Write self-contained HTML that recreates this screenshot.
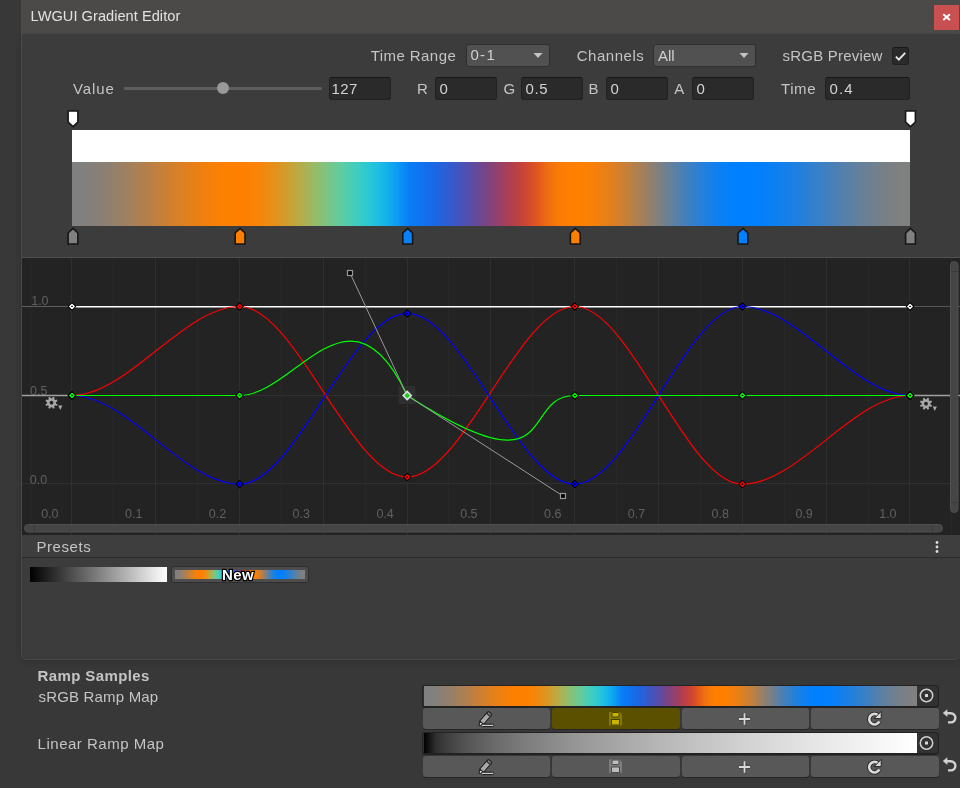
<!DOCTYPE html>
<html><head><meta charset="utf-8"><style>
*{margin:0;padding:0;box-sizing:border-box}
body{width:960px;height:788px;background:#383838;position:relative;overflow:hidden;font-family:"Liberation Sans", sans-serif;color:#c4c4c4;font-size:15px}
.a{position:absolute}
.fld{position:absolute;background:#2a2a2a;border:1px solid #212121;border-top-color:#161616;border-radius:3px}
.dd{position:absolute;background:#515151;border:1px solid #2f2f2f;border-radius:3px}
.btn{position:absolute;background:#585858;border-radius:3px;box-shadow:0 1px 0 #262626}
svg{position:absolute;left:0;top:0;will-change:transform}
</style></head><body>
<div class="a" style="left:21px;top:0;width:939px;height:34px;background:#4c4a48"></div>
<div class="a" style="left:934px;top:5px;width:25px;height:25px;background:#c85050"></div>
<div class="a" style="left:21px;top:34px;width:939px;height:626px;background:#3c3c3c;border-left:1px solid #4a4845;border-bottom:1px solid #4a4845;border-bottom-left-radius:5px;border-bottom-right-radius:5px;box-shadow:0 2px 6px rgba(0,0,0,0.15)"></div>

<div class="dd" style="left:466px;top:44px;width:84px;height:23px"></div>
<div class="dd" style="left:653px;top:44px;width:103px;height:23px"></div>
<div class="fld" style="left:892px;top:47px;width:17px;height:18px"></div>

<div class="a" style="left:124px;top:87px;width:198px;height:3px;background:#5e5e5e;border-radius:1px"></div>
<div class="a" style="left:217px;top:82px;width:12px;height:12px;background:#999;border-radius:50%"></div>
<div class="fld" style="left:329px;top:77px;width:62px;height:23px"></div>
<div class="fld" style="left:435px;top:77px;width:62px;height:23px"></div>
<div class="fld" style="left:521px;top:77px;width:62px;height:23px"></div>
<div class="fld" style="left:606px;top:77px;width:62px;height:23px"></div>
<div class="fld" style="left:692px;top:77px;width:62px;height:23px"></div>
<div class="fld" style="left:825px;top:77px;width:85px;height:23px"></div>

<div class="a" style="left:72px;top:130px;width:838px;height:32px;background:#fff"></div>
<div class="a" style="left:72px;top:162px;width:838px;height:64px;background:linear-gradient(90deg,#808080 0.00%,#80807f 0.50%,#80807f 1.01%,#827f7d 1.51%,#83807c 2.01%,#857f7a 2.51%,#878078 3.02%,#8a7f75 3.52%,#8d7f72 4.02%,#907f6f 4.52%,#94806b 5.03%,#978068 5.53%,#9b8064 6.03%,#9f8060 6.53%,#a4805b 7.04%,#a88057 7.54%,#ad8052 8.04%,#b17f4e 8.54%,#b67f49 9.05%,#bb7f44 9.55%,#c0803f 10.05%,#c5803a 10.55%,#c98036 11.06%,#ce8031 11.56%,#d3802c 12.06%,#d78028 12.56%,#dc8023 13.07%,#e0801f 13.57%,#e4801b 14.07%,#e88017 14.57%,#ec8013 15.08%,#ef8010 15.58%,#f2800d 16.08%,#f5800a 16.58%,#f88007 17.09%,#fa8005 17.59%,#fc8003 18.09%,#fd8002 18.59%,#fe8001 19.10%,#ff8000 19.60%,#ff8000 20.10%,#fe8001 20.60%,#fd8102 21.11%,#fb8305 21.61%,#f78508 22.11%,#f4870b 22.61%,#ef8a10 23.12%,#ea8e15 23.62%,#e4911b 24.12%,#de9521 24.62%,#d79928 25.13%,#d09e2f 25.63%,#c8a237 26.13%,#c0a73f 26.63%,#b8ab47 27.14%,#afaf50 27.64%,#a6b459 28.14%,#9eb862 28.64%,#94bc6b 29.15%,#8bbf74 29.65%,#82c37e 30.15%,#79c687 30.65%,#70c890 31.16%,#67ca99 31.66%,#5ecca2 32.16%,#55cdaa 32.66%,#4dcdb3 33.17%,#44cdbb 33.67%,#3dccc3 34.17%,#35cbca 34.67%,#2ec8d1 35.18%,#28c5d8 35.68%,#22c1de 36.18%,#1cbce3 36.68%,#17b6e8 37.19%,#13aeec 37.69%,#10a6ef 38.19%,#0d9df2 38.69%,#0b93f4 39.20%,#0a87f5 39.70%,#0a7ef5 40.20%,#0b7af4 40.70%,#0d76f2 41.21%,#0f73f0 41.71%,#136fed 42.21%,#176be9 42.71%,#1b68e4 43.22%,#2064df 43.72%,#2661d9 44.22%,#2d5ed3 44.72%,#345acc 45.23%,#3b57c4 45.73%,#4354bd 46.23%,#4b51b5 46.73%,#534fac 47.24%,#5c4ca4 47.74%,#654a9b 48.24%,#6e4792 48.74%,#774589 49.25%,#80437f 49.75%,#894276 50.25%,#93416d 50.75%,#9c4064 51.26%,#a53f5b 51.76%,#ae3f52 52.26%,#b64049 52.76%,#bf4141 53.27%,#c74439 53.77%,#ce4731 54.27%,#d64d2a 54.77%,#dd5323 55.28%,#e35c1c 55.78%,#e96516 56.28%,#ee6d11 56.78%,#f3730c 57.29%,#f77808 57.79%,#fa7b05 58.29%,#fc7e03 58.79%,#fe7f01 59.30%,#ff7f00 59.80%,#ff8000 60.30%,#fe8001 60.80%,#fc8003 61.31%,#f98006 61.81%,#f68009 62.31%,#f1800e 62.81%,#ec8013 63.32%,#e78018 63.82%,#e07f1f 64.32%,#da8025 64.82%,#d27f2d 65.33%,#cb8034 65.83%,#c3803d 66.33%,#ba8045 66.83%,#b1804e 67.34%,#a87f57 67.84%,#9f7f60 68.34%,#967f6a 68.84%,#8c7f73 69.35%,#83807d 69.85%,#798086 70.35%,#6f8090 70.85%,#668099 71.36%,#5d80a3 71.86%,#5380ac 72.36%,#4a80b5 72.86%,#4280be 73.37%,#3980c6 73.87%,#3180ce 74.37%,#2a80d5 74.87%,#2380dc 75.38%,#1c80e3 75.88%,#1680e9 76.38%,#1180ee 76.88%,#0c80f3 77.39%,#0880f7 77.89%,#0580fa 78.39%,#0280fd 78.89%,#0180fe 79.40%,#007fff 79.90%,#0080ff 80.40%,#0180fe 80.90%,#0280fd 81.41%,#0380fc 81.91%,#057ffa 82.41%,#0780f8 82.91%,#0a80f5 83.42%,#0d7ff2 83.92%,#1080ef 84.42%,#1380ec 84.92%,#1780e8 85.43%,#1b80e4 85.93%,#1f7fe0 86.43%,#237fdc 86.93%,#2880d7 87.44%,#2c80d3 87.94%,#3180ce 88.44%,#3680c9 88.94%,#3a80c5 89.45%,#3f80c0 89.95%,#4480bb 90.45%,#497fb6 90.95%,#4e80b1 91.46%,#5280ad 91.96%,#5780a8 92.46%,#5b80a4 92.96%,#60809f 93.47%,#64809b 93.97%,#688097 94.47%,#6b8094 94.97%,#6f8090 95.48%,#72808d 95.98%,#75808a 96.48%,#788087 96.98%,#7a8085 97.49%,#7c8083 97.99%,#7d8082 98.49%,#7f8080 98.99%,#7f8080 99.50%,#808080 100.00%)"></div>

<div class="a" style="left:22px;top:257px;width:938px;height:278px;background:#232323;border-top:1px solid #4f4f4f"></div>
<div class="a" style="left:22px;top:535px;width:938px;height:23px;background:#3e3e3e;border-bottom:1px solid #2a2a2a"></div>

<div class="a" style="left:30px;top:567px;width:137px;height:15px;background:linear-gradient(90deg,#000,#fff)"></div>
<div class="a" style="left:171px;top:566px;width:138px;height:17px;background:#4d4d4d;border:1px solid #2e2e2e;border-radius:3px"></div>
<div class="a" style="left:175px;top:570px;width:130px;height:9px;background:linear-gradient(90deg,#808080 0.00%,#80807f 0.50%,#80807f 1.01%,#827f7d 1.51%,#83807c 2.01%,#857f7a 2.51%,#878078 3.02%,#8a7f75 3.52%,#8d7f72 4.02%,#907f6f 4.52%,#94806b 5.03%,#978068 5.53%,#9b8064 6.03%,#9f8060 6.53%,#a4805b 7.04%,#a88057 7.54%,#ad8052 8.04%,#b17f4e 8.54%,#b67f49 9.05%,#bb7f44 9.55%,#c0803f 10.05%,#c5803a 10.55%,#c98036 11.06%,#ce8031 11.56%,#d3802c 12.06%,#d78028 12.56%,#dc8023 13.07%,#e0801f 13.57%,#e4801b 14.07%,#e88017 14.57%,#ec8013 15.08%,#ef8010 15.58%,#f2800d 16.08%,#f5800a 16.58%,#f88007 17.09%,#fa8005 17.59%,#fc8003 18.09%,#fd8002 18.59%,#fe8001 19.10%,#ff8000 19.60%,#ff8000 20.10%,#fe8001 20.60%,#fd8102 21.11%,#fb8305 21.61%,#f78508 22.11%,#f4870b 22.61%,#ef8a10 23.12%,#ea8e15 23.62%,#e4911b 24.12%,#de9521 24.62%,#d79928 25.13%,#d09e2f 25.63%,#c8a237 26.13%,#c0a73f 26.63%,#b8ab47 27.14%,#afaf50 27.64%,#a6b459 28.14%,#9eb862 28.64%,#94bc6b 29.15%,#8bbf74 29.65%,#82c37e 30.15%,#79c687 30.65%,#70c890 31.16%,#67ca99 31.66%,#5ecca2 32.16%,#55cdaa 32.66%,#4dcdb3 33.17%,#44cdbb 33.67%,#3dccc3 34.17%,#35cbca 34.67%,#2ec8d1 35.18%,#28c5d8 35.68%,#22c1de 36.18%,#1cbce3 36.68%,#17b6e8 37.19%,#13aeec 37.69%,#10a6ef 38.19%,#0d9df2 38.69%,#0b93f4 39.20%,#0a87f5 39.70%,#0a7ef5 40.20%,#0b7af4 40.70%,#0d76f2 41.21%,#0f73f0 41.71%,#136fed 42.21%,#176be9 42.71%,#1b68e4 43.22%,#2064df 43.72%,#2661d9 44.22%,#2d5ed3 44.72%,#345acc 45.23%,#3b57c4 45.73%,#4354bd 46.23%,#4b51b5 46.73%,#534fac 47.24%,#5c4ca4 47.74%,#654a9b 48.24%,#6e4792 48.74%,#774589 49.25%,#80437f 49.75%,#894276 50.25%,#93416d 50.75%,#9c4064 51.26%,#a53f5b 51.76%,#ae3f52 52.26%,#b64049 52.76%,#bf4141 53.27%,#c74439 53.77%,#ce4731 54.27%,#d64d2a 54.77%,#dd5323 55.28%,#e35c1c 55.78%,#e96516 56.28%,#ee6d11 56.78%,#f3730c 57.29%,#f77808 57.79%,#fa7b05 58.29%,#fc7e03 58.79%,#fe7f01 59.30%,#ff7f00 59.80%,#ff8000 60.30%,#fe8001 60.80%,#fc8003 61.31%,#f98006 61.81%,#f68009 62.31%,#f1800e 62.81%,#ec8013 63.32%,#e78018 63.82%,#e07f1f 64.32%,#da8025 64.82%,#d27f2d 65.33%,#cb8034 65.83%,#c3803d 66.33%,#ba8045 66.83%,#b1804e 67.34%,#a87f57 67.84%,#9f7f60 68.34%,#967f6a 68.84%,#8c7f73 69.35%,#83807d 69.85%,#798086 70.35%,#6f8090 70.85%,#668099 71.36%,#5d80a3 71.86%,#5380ac 72.36%,#4a80b5 72.86%,#4280be 73.37%,#3980c6 73.87%,#3180ce 74.37%,#2a80d5 74.87%,#2380dc 75.38%,#1c80e3 75.88%,#1680e9 76.38%,#1180ee 76.88%,#0c80f3 77.39%,#0880f7 77.89%,#0580fa 78.39%,#0280fd 78.89%,#0180fe 79.40%,#007fff 79.90%,#0080ff 80.40%,#0180fe 80.90%,#0280fd 81.41%,#0380fc 81.91%,#057ffa 82.41%,#0780f8 82.91%,#0a80f5 83.42%,#0d7ff2 83.92%,#1080ef 84.42%,#1380ec 84.92%,#1780e8 85.43%,#1b80e4 85.93%,#1f7fe0 86.43%,#237fdc 86.93%,#2880d7 87.44%,#2c80d3 87.94%,#3180ce 88.44%,#3680c9 88.94%,#3a80c5 89.45%,#3f80c0 89.95%,#4480bb 90.45%,#497fb6 90.95%,#4e80b1 91.46%,#5280ad 91.96%,#5780a8 92.46%,#5b80a4 92.96%,#60809f 93.47%,#64809b 93.97%,#688097 94.47%,#6b8094 94.97%,#6f8090 95.48%,#72808d 95.98%,#75808a 96.48%,#788087 96.98%,#7a8085 97.49%,#7c8083 97.99%,#7d8082 98.49%,#7f8080 98.99%,#7f8080 99.50%,#808080 100.00%)"></div>

<div class="a" style="left:422px;top:685px;width:517px;height:23px;background:#323232;border:1px solid #222;border-bottom-width:2px;border-radius:3px 4px 4px 3px"></div>
<div class="a" style="left:424px;top:686px;width:493px;height:20px;background:linear-gradient(90deg,#808080 0.00%,#80807f 0.50%,#80807f 1.01%,#827f7d 1.51%,#83807c 2.01%,#857f7a 2.51%,#878078 3.02%,#8a7f75 3.52%,#8d7f72 4.02%,#907f6f 4.52%,#94806b 5.03%,#978068 5.53%,#9b8064 6.03%,#9f8060 6.53%,#a4805b 7.04%,#a88057 7.54%,#ad8052 8.04%,#b17f4e 8.54%,#b67f49 9.05%,#bb7f44 9.55%,#c0803f 10.05%,#c5803a 10.55%,#c98036 11.06%,#ce8031 11.56%,#d3802c 12.06%,#d78028 12.56%,#dc8023 13.07%,#e0801f 13.57%,#e4801b 14.07%,#e88017 14.57%,#ec8013 15.08%,#ef8010 15.58%,#f2800d 16.08%,#f5800a 16.58%,#f88007 17.09%,#fa8005 17.59%,#fc8003 18.09%,#fd8002 18.59%,#fe8001 19.10%,#ff8000 19.60%,#ff8000 20.10%,#fe8001 20.60%,#fd8102 21.11%,#fb8305 21.61%,#f78508 22.11%,#f4870b 22.61%,#ef8a10 23.12%,#ea8e15 23.62%,#e4911b 24.12%,#de9521 24.62%,#d79928 25.13%,#d09e2f 25.63%,#c8a237 26.13%,#c0a73f 26.63%,#b8ab47 27.14%,#afaf50 27.64%,#a6b459 28.14%,#9eb862 28.64%,#94bc6b 29.15%,#8bbf74 29.65%,#82c37e 30.15%,#79c687 30.65%,#70c890 31.16%,#67ca99 31.66%,#5ecca2 32.16%,#55cdaa 32.66%,#4dcdb3 33.17%,#44cdbb 33.67%,#3dccc3 34.17%,#35cbca 34.67%,#2ec8d1 35.18%,#28c5d8 35.68%,#22c1de 36.18%,#1cbce3 36.68%,#17b6e8 37.19%,#13aeec 37.69%,#10a6ef 38.19%,#0d9df2 38.69%,#0b93f4 39.20%,#0a87f5 39.70%,#0a7ef5 40.20%,#0b7af4 40.70%,#0d76f2 41.21%,#0f73f0 41.71%,#136fed 42.21%,#176be9 42.71%,#1b68e4 43.22%,#2064df 43.72%,#2661d9 44.22%,#2d5ed3 44.72%,#345acc 45.23%,#3b57c4 45.73%,#4354bd 46.23%,#4b51b5 46.73%,#534fac 47.24%,#5c4ca4 47.74%,#654a9b 48.24%,#6e4792 48.74%,#774589 49.25%,#80437f 49.75%,#894276 50.25%,#93416d 50.75%,#9c4064 51.26%,#a53f5b 51.76%,#ae3f52 52.26%,#b64049 52.76%,#bf4141 53.27%,#c74439 53.77%,#ce4731 54.27%,#d64d2a 54.77%,#dd5323 55.28%,#e35c1c 55.78%,#e96516 56.28%,#ee6d11 56.78%,#f3730c 57.29%,#f77808 57.79%,#fa7b05 58.29%,#fc7e03 58.79%,#fe7f01 59.30%,#ff7f00 59.80%,#ff8000 60.30%,#fe8001 60.80%,#fc8003 61.31%,#f98006 61.81%,#f68009 62.31%,#f1800e 62.81%,#ec8013 63.32%,#e78018 63.82%,#e07f1f 64.32%,#da8025 64.82%,#d27f2d 65.33%,#cb8034 65.83%,#c3803d 66.33%,#ba8045 66.83%,#b1804e 67.34%,#a87f57 67.84%,#9f7f60 68.34%,#967f6a 68.84%,#8c7f73 69.35%,#83807d 69.85%,#798086 70.35%,#6f8090 70.85%,#668099 71.36%,#5d80a3 71.86%,#5380ac 72.36%,#4a80b5 72.86%,#4280be 73.37%,#3980c6 73.87%,#3180ce 74.37%,#2a80d5 74.87%,#2380dc 75.38%,#1c80e3 75.88%,#1680e9 76.38%,#1180ee 76.88%,#0c80f3 77.39%,#0880f7 77.89%,#0580fa 78.39%,#0280fd 78.89%,#0180fe 79.40%,#007fff 79.90%,#0080ff 80.40%,#0180fe 80.90%,#0280fd 81.41%,#0380fc 81.91%,#057ffa 82.41%,#0780f8 82.91%,#0a80f5 83.42%,#0d7ff2 83.92%,#1080ef 84.42%,#1380ec 84.92%,#1780e8 85.43%,#1b80e4 85.93%,#1f7fe0 86.43%,#237fdc 86.93%,#2880d7 87.44%,#2c80d3 87.94%,#3180ce 88.44%,#3680c9 88.94%,#3a80c5 89.45%,#3f80c0 89.95%,#4480bb 90.45%,#497fb6 90.95%,#4e80b1 91.46%,#5280ad 91.96%,#5780a8 92.46%,#5b80a4 92.96%,#60809f 93.47%,#64809b 93.97%,#688097 94.47%,#6b8094 94.97%,#6f8090 95.48%,#72808d 95.98%,#75808a 96.48%,#788087 96.98%,#7a8085 97.49%,#7c8083 97.99%,#7d8082 98.49%,#7f8080 98.99%,#7f8080 99.50%,#808080 100.00%)"></div>
<div class="a" style="left:422px;top:732px;width:517px;height:23px;background:#323232;border:1px solid #222;border-bottom-width:2px;border-radius:3px 4px 4px 3px"></div>
<div class="a" style="left:424px;top:733px;width:493px;height:20px;background:linear-gradient(90deg,#000000 0.0%,#303030 2.5%,#414141 5.0%,#4f4f4f 7.5%,#5a5a5a 10.0%,#636363 12.5%,#6c6c6c 15.0%,#737373 17.5%,#7b7b7b 20.0%,#818181 22.5%,#888888 25.0%,#8e8e8e 27.5%,#949494 30.0%,#999999 32.5%,#9e9e9e 35.0%,#a3a3a3 37.5%,#a8a8a8 40.0%,#adadad 42.5%,#b1b1b1 45.0%,#b6b6b6 47.5%,#bababa 50.0%,#bebebe 52.5%,#c2c2c2 55.0%,#c6c6c6 57.5%,#cacaca 60.0%,#cecece 62.5%,#d2d2d2 65.0%,#d5d5d5 67.5%,#d9d9d9 70.0%,#dcdcdc 72.5%,#e0e0e0 75.0%,#e3e3e3 77.5%,#e6e6e6 80.0%,#eaeaea 82.5%,#ededed 85.0%,#f0f0f0 87.5%,#f3f3f3 90.0%,#f6f6f6 92.5%,#f9f9f9 95.0%,#fcfcfc 97.5%,#ffffff 100.0%)"></div>
<div class="btn" style="left:423px;top:708px;width:127px;height:21px;background:#585858"></div><div class="btn" style="left:552px;top:708px;width:128px;height:21px;background:#5a5000"></div><div class="btn" style="left:682px;top:708px;width:127px;height:21px;background:#585858"></div><div class="btn" style="left:811px;top:708px;width:128px;height:21px;background:#585858"></div><div class="btn" style="left:423px;top:756px;width:127px;height:21px;background:#585858"></div><div class="btn" style="left:552px;top:756px;width:128px;height:21px;background:#585858"></div><div class="btn" style="left:682px;top:756px;width:127px;height:21px;background:#585858"></div><div class="btn" style="left:811px;top:756px;width:128px;height:21px;background:#585858"></div>

<svg width="960" height="788" font-family='"Liberation Sans", sans-serif'>
<g stroke="#161616" stroke-width="1.6"><path d="M68.10 111 h9.8 v11 l-4.9 4.7 l-4.9 -4.7 z" fill="#fff"/><path d="M905.60 111 h9.8 v11 l-4.9 4.7 l-4.9 -4.7 z" fill="#fff"/><path d="M68.10 244 h9.8 v-11 l-4.9 -4.7 l-4.9 4.7 z" fill="#808080"/><path d="M235.20 244 h9.8 v-11 l-4.9 -4.7 l-4.9 4.7 z" fill="#ff8000"/><path d="M402.80 244 h9.8 v-11 l-4.9 -4.7 l-4.9 4.7 z" fill="#0980f5"/><path d="M570.40 244 h9.8 v-11 l-4.9 -4.7 l-4.9 4.7 z" fill="#ff8000"/><path d="M738.00 244 h9.8 v-11 l-4.9 -4.7 l-4.9 4.7 z" fill="#0080ff"/><path d="M905.60 244 h9.8 v-11 l-4.9 -4.7 l-4.9 4.7 z" fill="#808080"/></g>
<g stroke="#2b2b2b" stroke-width="1"><line x1="30.5" y1="258" x2="30.5" y2="535" stroke="#282828"/><line x1="71.5" y1="258" x2="71.5" y2="535" stroke="#2f2f2f"/><line x1="113.5" y1="258" x2="113.5" y2="535" stroke="#282828"/><line x1="155.5" y1="258" x2="155.5" y2="535" stroke="#2f2f2f"/><line x1="197.5" y1="258" x2="197.5" y2="535" stroke="#282828"/><line x1="239.5" y1="258" x2="239.5" y2="535" stroke="#2f2f2f"/><line x1="281.5" y1="258" x2="281.5" y2="535" stroke="#282828"/><line x1="323.5" y1="258" x2="323.5" y2="535" stroke="#2f2f2f"/><line x1="365.5" y1="258" x2="365.5" y2="535" stroke="#282828"/><line x1="407.5" y1="258" x2="407.5" y2="535" stroke="#2f2f2f"/><line x1="448.5" y1="258" x2="448.5" y2="535" stroke="#282828"/><line x1="490.5" y1="258" x2="490.5" y2="535" stroke="#2f2f2f"/><line x1="532.5" y1="258" x2="532.5" y2="535" stroke="#282828"/><line x1="574.5" y1="258" x2="574.5" y2="535" stroke="#2f2f2f"/><line x1="616.5" y1="258" x2="616.5" y2="535" stroke="#282828"/><line x1="658.5" y1="258" x2="658.5" y2="535" stroke="#2f2f2f"/><line x1="700.5" y1="258" x2="700.5" y2="535" stroke="#282828"/><line x1="742.5" y1="258" x2="742.5" y2="535" stroke="#2f2f2f"/><line x1="784.5" y1="258" x2="784.5" y2="535" stroke="#282828"/><line x1="826.5" y1="258" x2="826.5" y2="535" stroke="#2f2f2f"/><line x1="868.5" y1="258" x2="868.5" y2="535" stroke="#282828"/><line x1="909.5" y1="258" x2="909.5" y2="535" stroke="#2f2f2f"/><line x1="951.5" y1="258" x2="951.5" y2="535" stroke="#282828"/><line x1="22" y1="306.5" x2="960" y2="306.5" stroke="#303030"/><line x1="22" y1="395.5" x2="960" y2="395.5" stroke="#303030"/><line x1="22" y1="483.5" x2="960" y2="483.5" stroke="#303030"/></g>
<g fill="#606060" font-size="12.5">
<text x="31.2" y="305.2">1.0</text><text x="30" y="394.5">0.5</text><text x="29.8" y="484">0.0</text>
<text x="41.2" y="518.2">0.0</text><text x="125.0" y="518.2">0.1</text><text x="208.8" y="518.2">0.2</text><text x="292.6" y="518.2">0.3</text><text x="376.4" y="518.2">0.4</text><text x="460.2" y="518.2">0.5</text><text x="544.0" y="518.2">0.6</text><text x="627.8" y="518.2">0.7</text><text x="711.6" y="518.2">0.8</text><text x="795.4" y="518.2">0.9</text><text x="879.2" y="518.2">1.0</text>
</g>
<line x1="22" y1="306.5" x2="72" y2="306.5" stroke="#5e5e5e" stroke-width="1"/>
<line x1="22" y1="395.5" x2="72" y2="395.5" stroke="#a0a0a0" stroke-width="1.5"/>
<line x1="910" y1="395.5" x2="960" y2="395.5" stroke="#a0a0a0" stroke-width="1.5"/>
<line x1="910" y1="306.5" x2="960" y2="306.5" stroke="#555" stroke-width="1"/>
<line x1="72" y1="306.7" x2="910" y2="306.7" stroke="#fff" stroke-width="1.6"/>
<rect x="398.5" y="386" width="17" height="18" fill="#2f2f2f"/>
<g fill="none" stroke-width="1.2">
<path d="M72.00 395.50 C127.87 395.50 183.73 306.50 239.60 306.50 C295.47 306.50 351.33 477.10 407.20 477.10 C463.07 477.10 518.93 306.50 574.80 306.50 C630.67 306.50 686.53 484.20 742.40 484.20 C798.27 484.20 854.13 395.50 910.00 395.50" stroke="#ff0000"/>
<path d="M72.00 395.50 C127.87 395.50 183.73 484.20 239.60 484.20 C295.47 484.20 351.33 313.44 407.20 313.44 C463.07 313.44 518.93 484.20 574.80 484.20 C630.67 484.20 686.53 306.50 742.40 306.50 C798.27 306.50 854.13 395.50 910.00 395.50" stroke="#0000ff"/>
<path d="M72.00 395.50 C127.87 395.50 183.73 395.50 239.60 395.50 C295.47 395.50 350.00 273.00 407.20 395.50 C563.00 496.00 518.93 395.50 574.80 395.50 C630.67 395.50 686.53 395.50 742.40 395.50 C798.27 395.50 854.13 395.50 910.00 395.50" stroke="#00ff00"/>
</g>
<g stroke="#9a9a9a" stroke-width="1" fill="none">
<line x1="350" y1="273" x2="407.2" y2="395.5"/>
<line x1="407.2" y1="395.5" x2="563" y2="496"/>
</g>
<rect x="347.5" y="270.5" width="5" height="5" fill="#000" stroke="#999" stroke-width="1.2"/>
<rect x="560.5" y="493.5" width="5" height="5" fill="#000" stroke="#999" stroke-width="1.2"/>
<path d="M67.6 306.5 l4.4 -4.4 l4.4 4.4 l-4.4 4.4 z" fill="#000"/><path d="M69.9 306.5 l2.1 -2.1 l2.1 2.1 l-2.1 2.1 z" fill="none" stroke="#fff" stroke-width="1.4"/><path d="M905.6 306.5 l4.4 -4.4 l4.4 4.4 l-4.4 4.4 z" fill="#000"/><path d="M907.9 306.5 l2.1 -2.1 l2.1 2.1 l-2.1 2.1 z" fill="none" stroke="#fff" stroke-width="1.4"/><path d="M67.6 395.5 l4.4 -4.4 l4.4 4.4 l-4.4 4.4 z" fill="#000"/><path d="M69.9 395.5 l2.1 -2.1 l2.1 2.1 l-2.1 2.1 z" fill="none" stroke="#ff0000" stroke-width="1.4"/><path d="M67.6 395.5 l4.4 -4.4 l4.4 4.4 l-4.4 4.4 z" fill="#000"/><path d="M69.9 395.5 l2.1 -2.1 l2.1 2.1 l-2.1 2.1 z" fill="none" stroke="#0000ff" stroke-width="1.4"/><path d="M67.6 395.5 l4.4 -4.4 l4.4 4.4 l-4.4 4.4 z" fill="#000"/><path d="M69.9 395.5 l2.1 -2.1 l2.1 2.1 l-2.1 2.1 z" fill="none" stroke="#00ff00" stroke-width="1.4"/><path d="M235.2 306.5 l4.4 -4.4 l4.4 4.4 l-4.4 4.4 z" fill="#000"/><path d="M237.5 306.5 l2.1 -2.1 l2.1 2.1 l-2.1 2.1 z" fill="none" stroke="#ff0000" stroke-width="1.4"/><path d="M235.2 484.2 l4.4 -4.4 l4.4 4.4 l-4.4 4.4 z" fill="#000"/><path d="M237.5 484.2 l2.1 -2.1 l2.1 2.1 l-2.1 2.1 z" fill="none" stroke="#0000ff" stroke-width="1.4"/><path d="M235.2 395.5 l4.4 -4.4 l4.4 4.4 l-4.4 4.4 z" fill="#000"/><path d="M237.5 395.5 l2.1 -2.1 l2.1 2.1 l-2.1 2.1 z" fill="none" stroke="#00ff00" stroke-width="1.4"/><path d="M402.8 477.1 l4.4 -4.4 l4.4 4.4 l-4.4 4.4 z" fill="#000"/><path d="M405.1 477.1 l2.1 -2.1 l2.1 2.1 l-2.1 2.1 z" fill="none" stroke="#ff0000" stroke-width="1.4"/><path d="M402.8 313.4 l4.4 -4.4 l4.4 4.4 l-4.4 4.4 z" fill="#000"/><path d="M405.1 313.4 l2.1 -2.1 l2.1 2.1 l-2.1 2.1 z" fill="none" stroke="#0000ff" stroke-width="1.4"/><path d="M570.4 306.5 l4.4 -4.4 l4.4 4.4 l-4.4 4.4 z" fill="#000"/><path d="M572.7 306.5 l2.1 -2.1 l2.1 2.1 l-2.1 2.1 z" fill="none" stroke="#ff0000" stroke-width="1.4"/><path d="M570.4 484.2 l4.4 -4.4 l4.4 4.4 l-4.4 4.4 z" fill="#000"/><path d="M572.7 484.2 l2.1 -2.1 l2.1 2.1 l-2.1 2.1 z" fill="none" stroke="#0000ff" stroke-width="1.4"/><path d="M570.4 395.5 l4.4 -4.4 l4.4 4.4 l-4.4 4.4 z" fill="#000"/><path d="M572.7 395.5 l2.1 -2.1 l2.1 2.1 l-2.1 2.1 z" fill="none" stroke="#00ff00" stroke-width="1.4"/><path d="M738.0 484.2 l4.4 -4.4 l4.4 4.4 l-4.4 4.4 z" fill="#000"/><path d="M740.3 484.2 l2.1 -2.1 l2.1 2.1 l-2.1 2.1 z" fill="none" stroke="#ff0000" stroke-width="1.4"/><path d="M738.0 306.5 l4.4 -4.4 l4.4 4.4 l-4.4 4.4 z" fill="#000"/><path d="M740.3 306.5 l2.1 -2.1 l2.1 2.1 l-2.1 2.1 z" fill="none" stroke="#0000ff" stroke-width="1.4"/><path d="M738.0 395.5 l4.4 -4.4 l4.4 4.4 l-4.4 4.4 z" fill="#000"/><path d="M740.3 395.5 l2.1 -2.1 l2.1 2.1 l-2.1 2.1 z" fill="none" stroke="#00ff00" stroke-width="1.4"/><path d="M905.6 395.5 l4.4 -4.4 l4.4 4.4 l-4.4 4.4 z" fill="#000"/><path d="M907.9 395.5 l2.1 -2.1 l2.1 2.1 l-2.1 2.1 z" fill="none" stroke="#ff0000" stroke-width="1.4"/><path d="M905.6 395.5 l4.4 -4.4 l4.4 4.4 l-4.4 4.4 z" fill="#000"/><path d="M907.9 395.5 l2.1 -2.1 l2.1 2.1 l-2.1 2.1 z" fill="none" stroke="#0000ff" stroke-width="1.4"/><path d="M905.6 395.5 l4.4 -4.4 l4.4 4.4 l-4.4 4.4 z" fill="#000"/><path d="M907.9 395.5 l2.1 -2.1 l2.1 2.1 l-2.1 2.1 z" fill="none" stroke="#00ff00" stroke-width="1.4"/>
<path d="M403.2 395.5 l4 -4 l4 4 l-4 4 z" fill="#22cc22" stroke="#e0e0e0" stroke-width="1.6"/>
<rect x="24.5" y="524.5" width="918" height="7.5" rx="3.75" fill="#454545" stroke="#505050" stroke-width="1"/><line x1="932.5" y1="525" x2="932.5" y2="532" stroke="#3a3a3a"/><line x1="34.5" y1="525" x2="34.5" y2="532" stroke="#3a3a3a"/>
<rect x="950.5" y="261.5" width="7.5" height="251" rx="3.75" fill="#454545" stroke="#505050" stroke-width="1"/><line x1="951" y1="502.5" x2="958" y2="502.5" stroke="#3a3a3a"/><line x1="951" y1="271.5" x2="958" y2="271.5" stroke="#3a3a3a"/>
<circle cx="937" cy="542.5" r="1.4" fill="#ddd"/><circle cx="937" cy="547" r="1.4" fill="#ddd"/><circle cx="937" cy="551.5" r="1.4" fill="#ddd"/>
<path d="M895.9 56.7 L898.8 59.6 L905.2 52.8" fill="none" stroke="#e8e8e8" stroke-width="1.9"/>
<path d="M533.5 53 h9 l-4.5 5 z" fill="#c4c4c4"/>
<path d="M739.5 53 h9 l-4.5 5 z" fill="#c4c4c4"/>
<path d="M943.3 14.3 l6.6 5.6 M949.9 14.3 l-6.6 5.6" stroke="#fff" stroke-width="2"/>
<circle cx="926.5" cy="695.5" r="6.2" fill="none" stroke="#cfcfcf" stroke-width="1.5"/><rect x="925" y="694" width="3" height="3" fill="#d8d8d8"/>
<circle cx="926.5" cy="743" r="6.2" fill="none" stroke="#cfcfcf" stroke-width="1.5"/><rect x="925" y="741.5" width="3" height="3" fill="#d8d8d8"/>

<g id="gear1" transform="translate(51.5 402.7)">
 <path d="M4.44 0.70 L6.03 1.45 L5.29 3.24 L3.64 2.65 L2.65 3.64 L3.24 5.29 L1.45 6.03 L0.70 4.44 L-0.70 4.44 L-1.45 6.03 L-3.24 5.29 L-2.65 3.64 L-3.64 2.65 L-5.29 3.24 L-6.03 1.45 L-4.44 0.70 L-4.44 -0.70 L-6.03 -1.45 L-5.29 -3.24 L-3.64 -2.65 L-2.65 -3.64 L-3.24 -5.29 L-1.45 -6.03 L-0.70 -4.44 L0.70 -4.44 L1.45 -6.03 L3.24 -5.29 L2.65 -3.64 L3.64 -2.65 L5.29 -3.24 L6.03 -1.45 L4.44 -0.70 Z" fill="#a8a8a8"/>
 <circle r="1.9" fill="#232323"/>
 <path d="M6.7 2.8 h4.2 l-2.1 4.4 z" fill="#a8a8a8"/>
</g>
<g transform="translate(926 403.7)">
 <path d="M4.44 0.70 L6.03 1.45 L5.29 3.24 L3.64 2.65 L2.65 3.64 L3.24 5.29 L1.45 6.03 L0.70 4.44 L-0.70 4.44 L-1.45 6.03 L-3.24 5.29 L-2.65 3.64 L-3.64 2.65 L-5.29 3.24 L-6.03 1.45 L-4.44 0.70 L-4.44 -0.70 L-6.03 -1.45 L-5.29 -3.24 L-3.64 -2.65 L-2.65 -3.64 L-3.24 -5.29 L-1.45 -6.03 L-0.70 -4.44 L0.70 -4.44 L1.45 -6.03 L3.24 -5.29 L2.65 -3.64 L3.64 -2.65 L5.29 -3.24 L6.03 -1.45 L4.44 -0.70 Z" fill="#a8a8a8"/>
 <circle r="1.9" fill="#232323"/>
 <path d="M6.7 2.8 h4.2 l-2.1 4.4 z" fill="#a8a8a8"/>
</g>
<g transform="translate(486 717)">
<g transform="translate(-0.8 1.6) rotate(-49)">
<rect x="-5.5" y="-2.5" width="12" height="5" rx="0.8" fill="#a9a9a9" stroke="#1e1e1e" stroke-width="1"/>
<rect x="4.8" y="-2.5" width="2.8" height="5" rx="1" fill="#7a7a7a" stroke="#1e1e1e" stroke-width="1"/>
<path d="M-5.5 -2.5 L-9.3 0 L-5.5 2.5 z" fill="#eee" stroke="#1e1e1e" stroke-width="1" stroke-linejoin="round"/>
</g>
<rect x="-4.8" y="7.2" width="12.6" height="2.4" rx="1.2" fill="#d0d0d0" stroke="#151515" stroke-width="1"/>
</g><g transform="translate(486 765)">
<g transform="translate(-0.8 1.6) rotate(-49)">
<rect x="-5.5" y="-2.5" width="12" height="5" rx="0.8" fill="#a9a9a9" stroke="#1e1e1e" stroke-width="1"/>
<rect x="4.8" y="-2.5" width="2.8" height="5" rx="1" fill="#7a7a7a" stroke="#1e1e1e" stroke-width="1"/>
<path d="M-5.5 -2.5 L-9.3 0 L-5.5 2.5 z" fill="#eee" stroke="#1e1e1e" stroke-width="1" stroke-linejoin="round"/>
</g>
<rect x="-4.8" y="7.2" width="12.6" height="2.4" rx="1.2" fill="#d0d0d0" stroke="#151515" stroke-width="1"/>
</g><g transform="translate(609 712)">
<path d="M0 0 h10.5 l2.5 2.5 v11 h-13 z" fill="#857700"/>
<rect x="3" y="0.5" width="7" height="4.5" rx="1" fill="#c8b400" stroke="#4a4200" stroke-width="1"/>
<rect x="2.5" y="7.5" width="8" height="5.5" fill="#c8b400" stroke="#4a4200" stroke-width="1"/>
</g><g transform="translate(609 759.5)">
<path d="M0 0 h10.5 l2.5 2.5 v11 h-13 z" fill="#7c7c7c"/>
<rect x="3" y="0.5" width="7" height="4.5" rx="1" fill="#bdbdbd" stroke="#4a4a4a" stroke-width="1"/>
<rect x="2.5" y="7.5" width="8" height="5.5" fill="#bdbdbd" stroke="#4a4a4a" stroke-width="1"/>
</g><path d="M739.0 719 h11 M744.5 713.3 v11.4" stroke="#141414" stroke-width="3.4" opacity="0.35"/><path d="M739.0 719 h11 M744.5 713.3 v11.4" stroke="#d8d8d8" stroke-width="1.8"/><path d="M739.0 767 h11 M744.5 761.3 v11.4" stroke="#141414" stroke-width="3.4" opacity="0.35"/><path d="M739.0 767 h11 M744.5 761.3 v11.4" stroke="#d8d8d8" stroke-width="1.8"/><g transform="translate(874.4 718.8)">
<path d="M3.9 -3.3 A5.3 5.3 0 1 0 4.9 2.6" fill="none" stroke="#1c1c1c" stroke-width="4.2"/>
<path d="M3.9 -3.3 A5.3 5.3 0 1 0 4.9 2.6" fill="none" stroke="#dadada" stroke-width="2.7"/>
<path d="M6.8 -7.4 v7.2 h-7 z" fill="#dadada" stroke="#1c1c1c" stroke-width="0.9" stroke-linejoin="round"/>
</g><g transform="translate(874.4 766.8)">
<path d="M3.9 -3.3 A5.3 5.3 0 1 0 4.9 2.6" fill="none" stroke="#1c1c1c" stroke-width="4.2"/>
<path d="M3.9 -3.3 A5.3 5.3 0 1 0 4.9 2.6" fill="none" stroke="#dadada" stroke-width="2.7"/>
<path d="M6.8 -7.4 v7.2 h-7 z" fill="#dadada" stroke="#1c1c1c" stroke-width="0.9" stroke-linejoin="round"/>
</g><g transform="translate(950 718.5)">
<path d="M-3.5 -5.3 h4.3 a4.6 4.6 0 0 1 0 9.2 h-2.8" fill="none" stroke="#d0d0d0" stroke-width="2.4"/>
<path d="M-7.2 -5.4 l4.6 -3.8 v7.6 z" fill="#d0d0d0"/>
</g><g transform="translate(950 766.5)">
<path d="M-3.5 -5.3 h4.3 a4.6 4.6 0 0 1 0 9.2 h-2.8" fill="none" stroke="#d0d0d0" stroke-width="2.4"/>
<path d="M-7.2 -5.4 l4.6 -3.8 v7.6 z" fill="#d0d0d0"/>
</g>
<text x="30.60" y="20.60" font-size="14.6" font-weight="normal" fill="#e2e2e2" letter-spacing="0.035">LWGUI Gradient Editor</text>
<text x="370.80" y="60.80" font-size="15" font-weight="normal" fill="#c4c4c4" letter-spacing="0.422">Time Range</text>
<text x="470.40" y="60.40" font-size="15" font-weight="normal" fill="#d2d2d2" letter-spacing="1.331">0-1</text>
<text x="576.70" y="60.80" font-size="15" font-weight="normal" fill="#c4c4c4" letter-spacing="0.532">Channels</text>
<text x="658.00" y="60.60" font-size="15" font-weight="normal" fill="#d2d2d2" letter-spacing="-0.069">All</text>
<text x="782.50" y="61.00" font-size="15" font-weight="normal" fill="#c4c4c4" letter-spacing="0.210">sRGB Preview</text>
<text x="73.00" y="93.80" font-size="15" font-weight="normal" fill="#c4c4c4" letter-spacing="0.898">Value</text>
<text x="331.50" y="94.00" font-size="15" font-weight="normal" fill="#d2d2d2" letter-spacing="0.408">127</text>
<text x="417.00" y="94.00" font-size="15" font-weight="normal" fill="#c4c4c4" letter-spacing="0.000">R</text>
<text x="439.40" y="94.00" font-size="15" font-weight="normal" fill="#d2d2d2" letter-spacing="0.000">0</text>
<text x="503.50" y="94.00" font-size="15" font-weight="normal" fill="#c4c4c4" letter-spacing="0.000">G</text>
<text x="525.40" y="94.00" font-size="15" font-weight="normal" fill="#d2d2d2" letter-spacing="0.695">0.5</text>
<text x="588.60" y="94.00" font-size="15" font-weight="normal" fill="#c4c4c4" letter-spacing="0.000">B</text>
<text x="610.40" y="94.00" font-size="15" font-weight="normal" fill="#d2d2d2" letter-spacing="0.000">0</text>
<text x="674.20" y="94.00" font-size="15" font-weight="normal" fill="#c4c4c4" letter-spacing="0.000">A</text>
<text x="696.50" y="94.00" font-size="15" font-weight="normal" fill="#d2d2d2" letter-spacing="0.000">0</text>
<text x="781.00" y="94.00" font-size="15" font-weight="normal" fill="#c4c4c4" letter-spacing="0.589">Time</text>
<text x="829.40" y="94.00" font-size="15" font-weight="normal" fill="#d2d2d2" letter-spacing="1.195">0.4</text>
<text x="36.50" y="551.70" font-size="15" font-weight="normal" fill="#c4c4c4" letter-spacing="0.558">Presets</text>
<text x="37.60" y="680.80" font-size="15" font-weight="bold" fill="#c4c4c4" letter-spacing="0.382">Ramp Samples</text>
<text x="38.60" y="702.20" font-size="15" font-weight="normal" fill="#c4c4c4" letter-spacing="0.168">sRGB Ramp Map</text>
<text x="37.60" y="749.00" font-size="15" font-weight="normal" fill="#c4c4c4" letter-spacing="0.508">Linear Ramp Map</text>
<text x="222" y="580" font-size="15" font-weight="bold" fill="#fff" stroke="#000" stroke-width="2.4" paint-order="stroke" letter-spacing="0.4">New</text>
</svg>
</body></html>
